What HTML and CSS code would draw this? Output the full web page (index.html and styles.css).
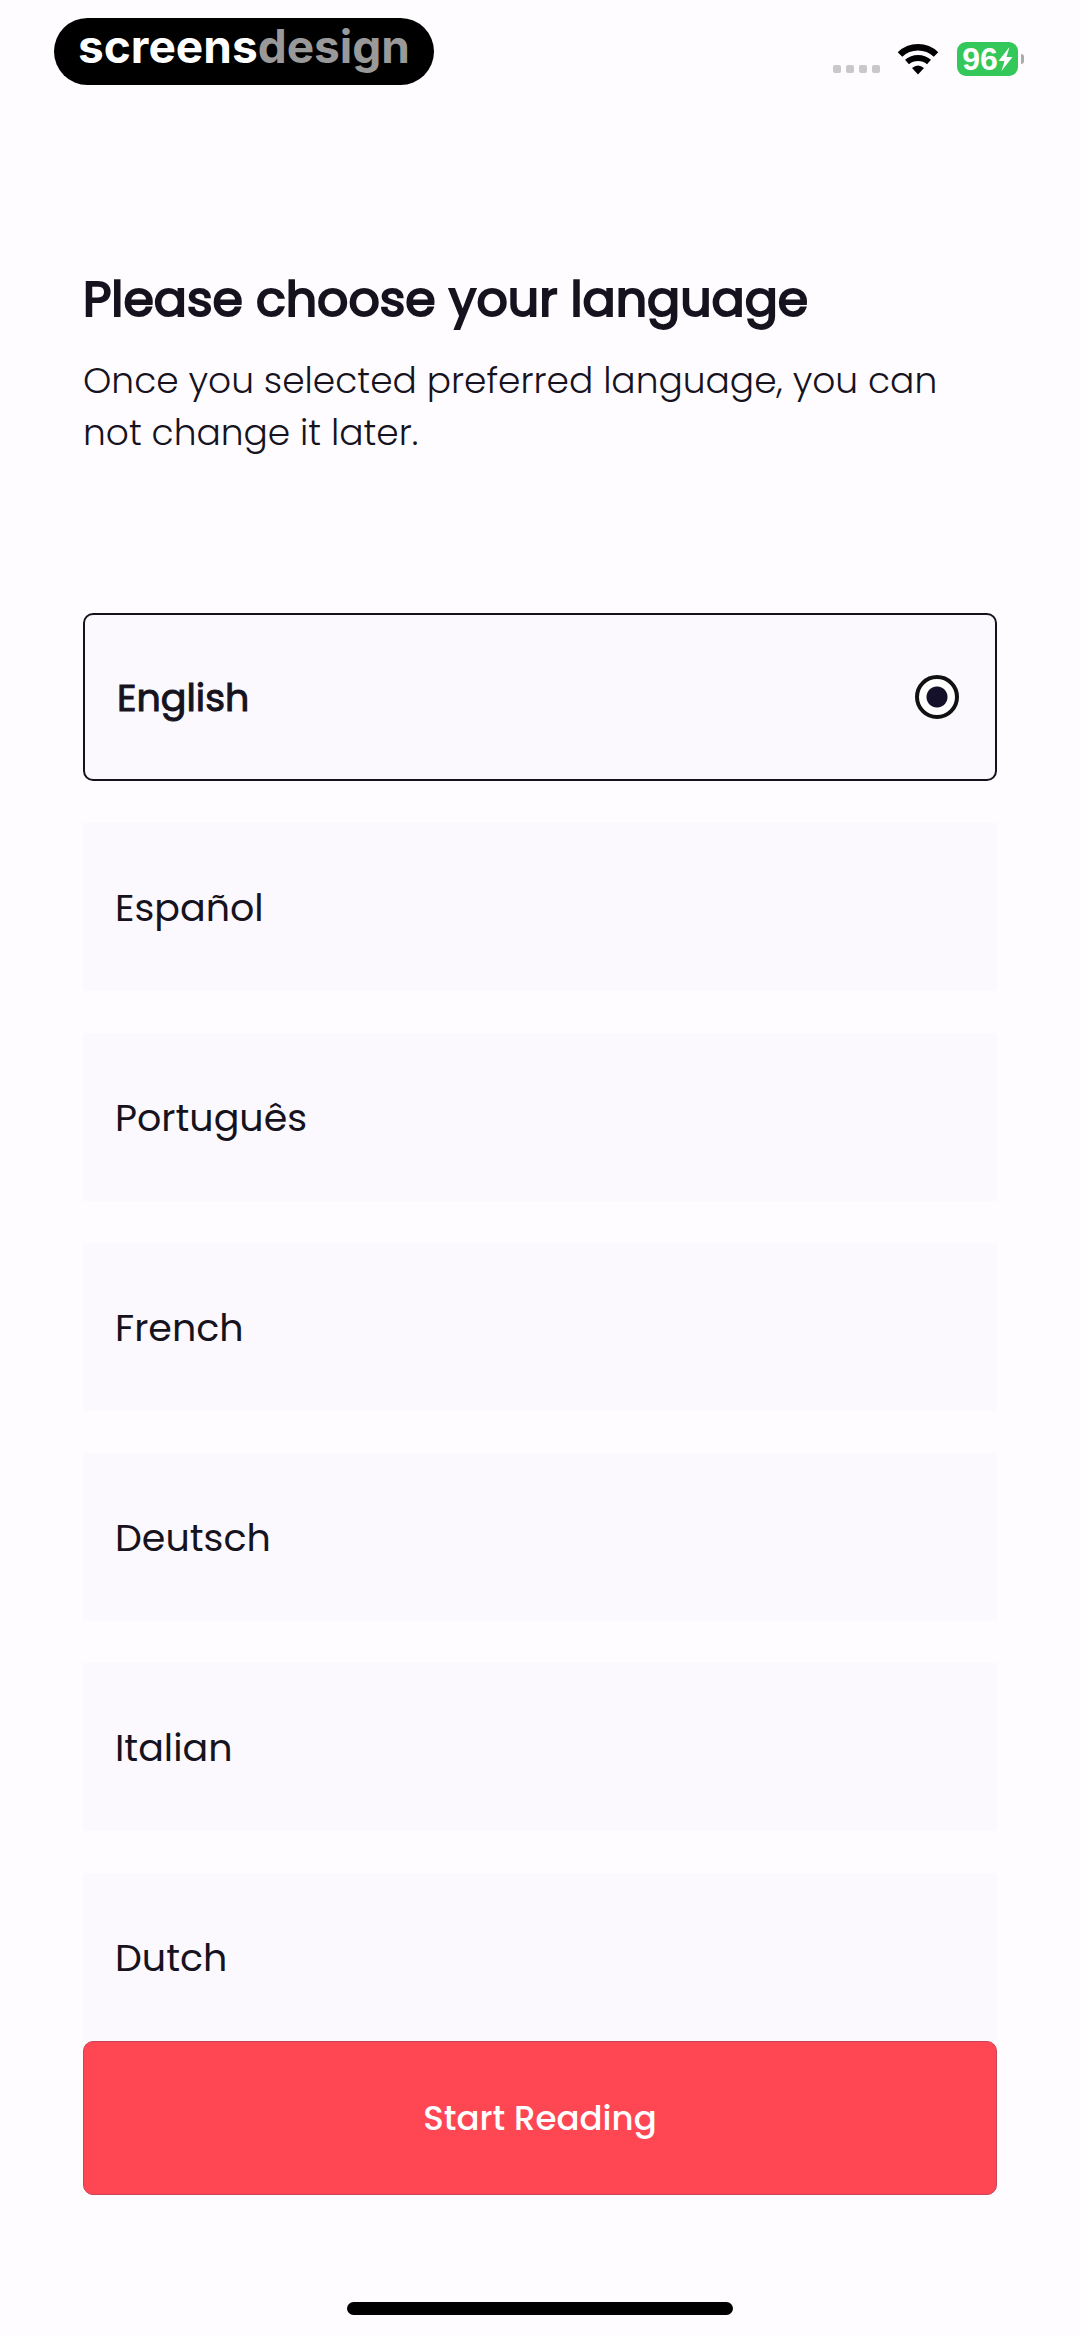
FILE: index.html
```html
<!DOCTYPE html>
<html lang="en">
<head>
    <meta charset="UTF-8">
    <meta name="viewport" content="width=device-width, initial-scale=1.0">
    <title>Choose your language</title>
    <link rel="stylesheet" href="styles.css">
</head>
<body>
    <header class="status-bar">
        <div class="brand">screens<span>design</span></div>
        <div class="status-icons">
            <div class="signal"><i></i><i></i><i></i><i></i></div>
            <svg class="wifi" viewBox="0 0 42 32" aria-hidden="true">
                <path d="M3 11.500a26 26 0 0 1 36 0" fill="none" stroke="#000" stroke-width="6.500"/>
                <path d="M10 19a17 17 0 0 1 22 0" fill="none" stroke="#000" stroke-width="6"/>
                <path d="M15 25q6-5 12 0l-6 6.500z"/>
            </svg>
            <div class="battery">
                <span>96</span>
                <svg viewBox="0 0 14 24" aria-hidden="true"><path d="M11 0L0 14h6L3 24 14 10H8z" fill="#fff"/></svg>
            </div>
        </div>
    </header>

    <main class="container">
        <h1>Please choose your language</h1>
        <p class="note">Once you selected preferred language, you can not change it later.</p>

        <form class="language-form">
            <div class="language-list">
                <label class="language"><span>English</span><input type="radio" name="language" value="en" checked></label>
                <label class="language"><span>Español</span><input type="radio" name="language" value="es"></label>
                <label class="language"><span>Português</span><input type="radio" name="language" value="pt"></label>
                <label class="language"><span>French</span><input type="radio" name="language" value="fr"></label>
                <label class="language"><span>Deutsch</span><input type="radio" name="language" value="de"></label>
                <label class="language"><span>Italian</span><input type="radio" name="language" value="it"></label>
                <label class="language"><span>Dutch</span><input type="radio" name="language" value="nl"></label>
            </div>
            <button type="submit" class="start">Start Reading</button>
        </form>
    </main>

    <div class="home-indicator"></div>
</body>
</html>
```
FILE: styles.css
```css
* {
    box-sizing: border-box;
}
body {
    font-family: Poppins, Inter, sans-serif;
    margin: 0;
    min-height: 100vh;
    display: flex;
    flex-direction: column;
    background-color: #fefcfe;
    color: #16131f;
}

/* status bar */
.status-bar {
    display: flex;
    justify-content: space-between;
    align-items: flex-start;
    padding: 18px 56px 0 54px;
}
.brand {
    padding: 0 24px;
    height: 67px;
    line-height: 56px;
    border-radius: 34px;
    background-color: #000;
    color: #fff;
    font-family: Inter, sans-serif;
    font-size: 46px;
    font-weight: 700;
}
.brand span {
    color: #999;
}
.status-icons {
    display: flex;
    align-items: center;
    padding-top: 24px;
}
.signal {
    display: flex;
    gap: 5px;
    margin: 20px 17px 0 0;
}
.signal i {
    width: 8px;
    height: 8px;
    border-radius: 2px;
    background-color: #c9c7c9;
}
.wifi {
    width: 42px;
    height: 32px;
    margin-right: 18px;
}
.battery {
    position: relative;
    display: flex;
    align-items: center;
    justify-content: center;
    width: 61px;
    height: 34px;
    margin-right: 6px;
    border-radius: 9px;
    background-color: #34c759;
    color: #fff;
    font-size: 32px;
    font-weight: 700;
    font-family: "Liberation Sans", Arial, sans-serif;
}
.battery svg {
    width: 15px;
    height: 24px;
}
.battery::after {
    content: "";
    position: absolute;
    right: -6px;
    top: 12px;
    width: 3px;
    height: 10px;
    border-radius: 0 3px 3px 0;
    background-color: #aaa;
}

/* content */
.container {
    flex: 1;
    padding: 184px 83px 0;
}
h1 {
    margin: 0;
    font-size: 49px;
    line-height: 60px;
    font-weight: 400;
    -webkit-text-stroke: 2px #16131f;
}
.note {
    margin: 26px 0 154px;
    font-size: 36px;
    line-height: 52px;
    font-weight: 300;
}
.language-list {
    display: flex;
    flex-direction: column;
    gap: 42px;
}
.language {
    display: flex;
    align-items: center;
    justify-content: space-between;
    height: 168px;
    padding: 0 36px 0 32px;
    background-color: #fbf9fd;
    font-size: 38px;
    cursor: pointer;
}
.language:has(input:checked) {
    border: 2px solid #16131f;
    border-radius: 10px;
    -webkit-text-stroke: 1px #16131f;
}
.language input {
    appearance: none;
    margin: 0;
    width: 44px;
    height: 44px;
    border-radius: 50%;
}
.language input:checked {
    border: 4px solid #111;
    background: radial-gradient(circle, #16112a 10px, #fff 11px);
}
.start {
    display: block;
    width: 100%;
    height: 154px;
    border: 1px solid #c94459;
    border-radius: 10px;
    background-color: #ff4754;
    color: #fff;
    font-family: inherit;
    font-size: 34px;
    font-weight: 500;
    cursor: pointer;
}

.home-indicator {
    width: 386px;
    height: 13px;
    margin: 0 auto 21px;
    border-radius: 7px;
    background-color: #000;
}
```
